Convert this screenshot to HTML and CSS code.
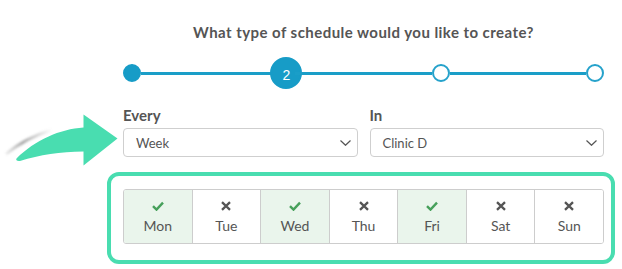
FILE: index.html
```html
<!DOCTYPE html>
<html lang="en">
<head>
    <meta charset="UTF-8">
    <meta name="viewport" content="width=device-width, initial-scale=1.0">
    <title>Create schedule</title>
    <link rel="stylesheet" href="styles.css">
</head>
<body>
    <div class="page">
        <div class="gutter">
            <svg class="pointer" width="123" height="60" viewBox="0 0 123 60">
                <defs>
                    <linearGradient id="shadeFade" x1="0" y1="0" x2="1" y2="0">
                        <stop offset="0" stop-color="#8a8a8a" stop-opacity="0.15"/>
                        <stop offset="0.35" stop-color="#8a8a8a" stop-opacity="0.7"/>
                        <stop offset="1" stop-color="#8a8a8a" stop-opacity="0"/>
                    </linearGradient>
                    <filter id="soft" x="-20%" y="-50%" width="140%" height="200%">
                        <feGaussianBlur stdDeviation="1.2"/>
                    </filter>
                </defs>
                <path d="M6 44 C18 34, 32 26, 52 20" fill="none" stroke="url(#shadeFade)" stroke-width="3" filter="url(#soft)"/>
                <path d="M117.5 28.5 L83.5 4.5 L83.5 17.5 C60 19, 35 30, 16.5 48.5 C15.5 50, 17 51.5, 20 51 C40 45, 60 41.5, 83.5 41.5 L83.5 55.5 Z" fill="#49ddb0"/>
            </svg>
        </div>

        <div class="main">
            <h1>What type of schedule would you like to create?</h1>

            <div class="stepper">
                <span class="dot done"></span>
                <span class="track"></span>
                <span class="dot current">2</span>
                <span class="track"></span>
                <span class="dot"></span>
                <span class="track"></span>
                <span class="dot"></span>
            </div>

            <div class="fields">
                <div class="field">
                    <label>Every</label>
                    <div class="select">
                        <span>Week</span>
                        <svg width="11" height="6" viewBox="0 0 11 6"><path d="M0.5 0.5 L5.5 5.3 L10.5 0.5" fill="none" stroke="#555" stroke-width="1.2"/></svg>
                    </div>
                </div>
                <div class="field">
                    <label>In</label>
                    <div class="select">
                        <span>Clinic D</span>
                        <svg width="11" height="6" viewBox="0 0 11 6"><path d="M0.5 0.5 L5.5 5.3 L10.5 0.5" fill="none" stroke="#555" stroke-width="1.2"/></svg>
                    </div>
                </div>
            </div>

            <div class="days-box">
                <div class="days">
                    <div class="day on">
                        <svg width="12" height="10" viewBox="0 0 12 10"><path d="M1 5.2 L4.5 8.6 L11 1.6" fill="none" stroke="#47a05b" stroke-width="2.4"/></svg>
                        <span>Mon</span>
                    </div>
                    <div class="day">
                        <svg width="12" height="10" viewBox="0 0 12 10"><path d="M2 1.2 L10 8.8 M10 1.2 L2 8.8" fill="none" stroke="#555" stroke-width="2.3"/></svg>
                        <span>Tue</span>
                    </div>
                    <div class="day on">
                        <svg width="12" height="10" viewBox="0 0 12 10"><path d="M1 5.2 L4.5 8.6 L11 1.6" fill="none" stroke="#47a05b" stroke-width="2.4"/></svg>
                        <span>Wed</span>
                    </div>
                    <div class="day">
                        <svg width="12" height="10" viewBox="0 0 12 10"><path d="M2 1.2 L10 8.8 M10 1.2 L2 8.8" fill="none" stroke="#555" stroke-width="2.3"/></svg>
                        <span>Thu</span>
                    </div>
                    <div class="day on">
                        <svg width="12" height="10" viewBox="0 0 12 10"><path d="M1 5.2 L4.5 8.6 L11 1.6" fill="none" stroke="#47a05b" stroke-width="2.4"/></svg>
                        <span>Fri</span>
                    </div>
                    <div class="day">
                        <svg width="12" height="10" viewBox="0 0 12 10"><path d="M2 1.2 L10 8.8 M10 1.2 L2 8.8" fill="none" stroke="#555" stroke-width="2.3"/></svg>
                        <span>Sat</span>
                    </div>
                    <div class="day">
                        <svg width="12" height="10" viewBox="0 0 12 10"><path d="M2 1.2 L10 8.8 M10 1.2 L2 8.8" fill="none" stroke="#555" stroke-width="2.3"/></svg>
                        <span>Sun</span>
                    </div>
                </div>
            </div>
        </div>
    </div>
</body>
</html>
```

FILE: styles.css
```css
* {
    margin: 0;
    padding: 0;
    box-sizing: border-box;
    font-family: 'Lato', 'Open Sans', sans-serif;
}

body {
    background: #fff;
    color: #555;
    width: 622px;
    height: 269px;
    overflow: hidden;
}

.page {
    display: flex;
}

.gutter {
    width: 123px;
    flex-shrink: 0;
    padding-top: 110px;
}

.pointer {
    display: block;
}

.main {
    width: 481px;
    padding-top: 24px;
}

h1 {
    text-align: center;
    font-size: 15px;
    line-height: 17px;
    letter-spacing: 0.45px;
    font-weight: 700;
    color: #555;
}

/* шаги */
.stepper {
    display: flex;
    align-items: center;
    height: 32px;
    margin-top: 16px;
}

.track {
    flex: 1;
    height: 3px;
    background: #1a9ec8;
}

.dot {
    width: 18px;
    height: 18px;
    border-radius: 50%;
    border: 2px solid #26a2cb;
    background: #fff;
    flex-shrink: 0;
}

.dot.done {
    background: #179cc7;
    border-color: #179cc7;
}

.dot.current {
    width: 32px;
    height: 32px;
    margin: 0 -7px;
    background: #179cc7;
    border-color: #179cc7;
    color: #fff;
    font-family: 'Liberation Sans', Arial, sans-serif;
    font-size: 14px;
    display: flex;
    align-items: center;
    justify-content: center;
    padding-top: 3px;
}

.fields {
    display: grid;
    grid-template-columns: 1fr 1fr;
    gap: 12px;
    margin-top: 17px;
}

label {
    display: block;
    font-size: 15px;
    line-height: 18px;
    font-weight: 700;
    color: #555;
    margin-bottom: 4px;
}

.select {
    height: 29px;
    border: 1px solid #cfcfcf;
    border-radius: 4px;
    display: flex;
    align-items: center;
    justify-content: space-between;
    padding: 0 6px 0 12px;
    font-size: 13px;
    color: #555;
}

.select svg {
    display: block;
}

.days-box {
    margin: 15px -11px 0 -16px;
    border: 4px solid #49ddb0;
    border-radius: 12px;
    padding: 13px 7px 16px 12px;
}

.days {
    display: flex;
    border: 1px solid #cdcdcd;
    border-radius: 3px;
    overflow: hidden;
}

.day {
    flex: 1;
    display: flex;
    flex-direction: column;
    align-items: center;
    padding: 11px 0 9px;
    border-left: 1px solid #cdcdcd;
    background: #fff;
}

.day:first-child {
    border-left: none;
}

.day.on {
    background: #eaf5ec;
}

.day svg {
    display: block;
    margin-bottom: 6px;
}

.day span {
    font-size: 14px;
    line-height: 17px;
    color: #555;
}
```
